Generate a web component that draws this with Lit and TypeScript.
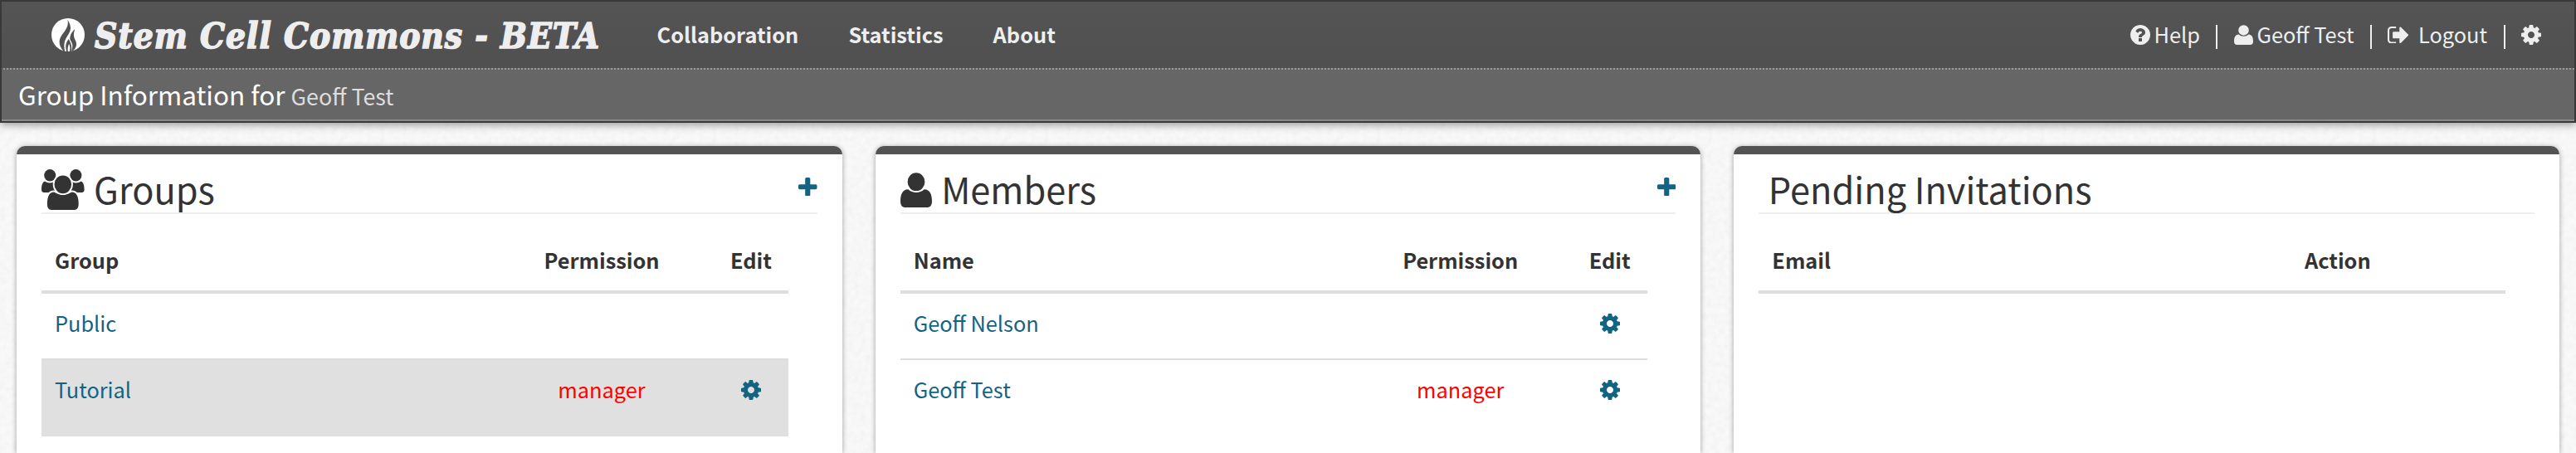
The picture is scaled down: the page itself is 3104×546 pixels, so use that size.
import { LitElement, html, css, svg, nothing } from "lit";
import { customElement, property } from "lit/decorators.js";
import { classMap } from "lit/directives/class-map.js";

const COG = svg`<path d="M1152 896q0-106-75-181t-181-75-181 75-75 181 75 181 181 75 181-75 75-181zm512-109v222q0 12-8 23t-20 13l-185 28q-19 54-39 91 35 50 107 138 10 12 10 25t-9 23q-27 37-99 108t-94 71q-12 0-26-9l-138-108q-44 23-91 38-16 136-29 186-7 28-36 28h-222q-14 0-24.500-8.500t-11.500-21.500l-28-184q-49-16-90-37l-141 107q-10 9-25 9-14 0-25-11-126-114-165-168-7-10-7-23 0-12 8-23 15-21 51-66.500t54-70.500q-27-50-41-99l-183-27q-13-2-21-12.500t-8-23.500v-222q0-12 8-23t19-13l186-28q14-46 39-92-40-57-107-138-10-12-10-24 0-10 9-23 26-36 98.500-107.500t94.500-71.500q13 0 26 10l138 107q44-23 91-38 16-136 29-186 7-28 36-28h222q14 0 24.500 8.500t11.500 21.500l28 184q49 16 90 37l142-107q9-9 24-9 13 0 25 10 129 119 165 170 7 8 7 22 0 12-8 23-15 21-51 66.500t-54 70.500q26 50 41 98l183 28q13 2 21 12.500t8 23.500z"/>`;
const PLUS = svg`<path d="M1600 736v192q0 40-28 68t-68 28h-416v416q0 40-28 68t-68 28h-192q-40 0-68-28t-28-68v-416h-416q-40 0-68-28t-28-68v-192q0-40 28-68t68-28h416v-416q0-40 28-68t68-28h192q40 0 68 28t28 68v416h416q40 0 68 28t28 68z"/>`;
const HELP = svg`<path d="M1024 1376v-192q0-14-9-23t-23-9h-192q-14 0-23 9t-9 23v192q0 14 9 23t23 9h192q14 0 23-9t9-23zm256-672q0-88-55.500-163t-138.500-116-170-41q-243 0-371 213-15 24 8 42l132 100q7 6 19 6 16 0 25-12 53-68 86-92 34-24 86-24 48 0 85.500 26t37.500 59q0 38-20 61t-68 45q-63 28-115.500 86.500t-52.500 125.500v36q0 14 9 23t23 9h192q14 0 23-9t9-23q0-19 21.500-49.500t54.500-49.500q32-18 49-28.500t46-35 44.500-48 28-60.500 12.500-81zm384 192q0 209-103 385.500t-279.500 279.500-385.500 103-385.500-103-279.500-279.500-103-385.500 103-385.500 279.500-279.500 385.500-103 385.500 103 279.500 279.500 103 385.500z"/>`;
const OUT = svg`<path d="M704 1440q0 4 1 20t.5 26.500-3 23.500-10 19.500-20.500 6.500h-320q-119 0-203.500-84.500t-84.500-203.500v-704q0-119 84.500-203.500t203.500-84.500h320q13 0 22.500 9.500t9.500 22.500q0 4 1 20t.5 26.500-3 23.500-10 19.500-20.500 6.500h-320q-66 0-113 47t-47 113v704q0 66 47 113t113 47h312l11.500 1 11.500 3 8 5.500 7 9 2 13.500zm928-544q0 26-19 45l-544 544q-19 19-45 19t-45-19-19-45v-288h-448q-26 0-45-19t-19-45v-384q0-26 19-45t45-19h448v-288q0-26 19-45t45-19 45 19l544 544q19 19 19 45z"/>`;
const USER = svg`<path d="M19 0.3a10.4 10.9 0 1 1 0 21.8a10.4 10.9 0 1 1 0-21.8z"/><path d="M9.4 20.2C12 22.800 15.400 24 19 24s7-1.200 9.600-3.800C35.500 20 38 26.500 38 34.500C38 39.500 35.800 42 32 42H6C2.200 42 0 39.500 0 34.500C0 26.500 2.500 20 9.400 20.200z"/>`;
const SIDE = svg`<ellipse cx="10.200" cy="7.300" rx="7" ry="7.200"/><path d="M4.200 14.500C7.800 17 11 17 14.600 15.200L16 28H3C1 28 0 26.800 0 24.600C0 20 .8 15.400 4.200 14.500z"/>`;
const GROUP = svg`<g>${SIDE}</g><g transform="matrix(-1 0 0 1 51.600 0)">${SIDE}</g>
<g stroke="#fff" stroke-width="1.800"><path d="M15 26.500C22 31 29.600 31 36.600 26.500C43 26.500 45.600 33 45.600 42C45.600 47.500 43.500 49.900 39.600 49.900H12C8 49.900 6 47.500 6 42C6 33 8.600 26.500 15 26.500z"/><ellipse cx="25.800" cy="18.300" rx="11.200" ry="11.800"/></g>`;
const FLAME = svg`<circle cx="60.500" cy="60.500" r="60.500" fill="#fff"/><g fill="#525252"><path d="M59 5C78 36 68 50 56 68C46 84 44 98 49 122L44 120C28 102 24 84 36 64C48 46 64 32 59 5z"/><path d="M85 40C80 56 80 66 86 78C96 96 90 108 78 119L72 121C80 102 77 92 69 80C64 68 73 50 85 40z"/><path d="M63 76C51 90 50 104 55 122H60C58 108 61 101 64 94C68 101 69 108 66 122H71C77 104 71 92 63 76z"/></g>`;

const icon = (shape: unknown, viewBox: string, cls: string) =>
  html`<svg class="icon ${cls}" viewBox=${viewBox} preserveAspectRatio="none" aria-hidden="true">${shape}</svg>`;
const SQUARE = "128 128 1536 1536";

interface Row { name: string; permission?: string; editable?: boolean; active?: boolean; }

@customElement("info-panel")
class InfoPanel extends LitElement {
  @property() heading = "";
  @property() kind = "";
  @property({ attribute: false }) columns: string[] = [];
  @property({ attribute: false }) rows: Row[] = [];

  static styles = css`
    :host { display: flex; flex-direction: column; flex: 1 1 0; min-width: 0; background: #fff; border-radius: 10px 10px 0 0; box-shadow: 0 1px 6px rgba(0,0,0,.36); }
    .bar { flex: none; height: 10px; background: #535353; border-radius: 10px 10px 0 0; }
    .body { padding: 0 30px; }
    .head { display: flex; align-items: center; height: 58px; padding-top: 12px; margin-bottom: 20px; border-bottom: 2px solid #eee; }
    h2 { margin: 0; font-size: 43.300px; line-height: 58px; font-weight: 400; color: #333; white-space: nowrap; flex: 1; }
    h2.plain { padding-left: 11.500px; }
    .icon { display: block; flex: none; fill: #333; }
    .group { width: 51.600px; height: 49.500px; margin: 3px 11.500px 0 0; }
    .user { width: 38px; height: 42px; margin: 3px 11px 0 .5px; }
    .plus { width: 22.500px; height: 22.500px; fill: #136382; margin-bottom: 4px; }
    .cog { width: 24px; height: 24px; fill: #136382; margin-top: 8px; }
    .table { width: 900px; }
    .row { display: grid; grid-template-columns: 540px 270px 90px; box-sizing: border-box; height: 80px; padding-top: 16px; line-height: 38px; }
    .two .row { grid-template-columns: 495px 405px; }
    .th { height: 76px; font-weight: 700; border-bottom: 4px solid #ddd; color: #333; }
    .row + .row:not(.first) { border-top: 2px solid #ddd; }
    .first { height: 78px; }
    .active { background: #e0e0e0; height: 94px; }
    .cell { padding: 0 16px; white-space: nowrap; }
    .mid { display: flex; justify-content: center; padding: 0; }
    .link { color: #136382; }
    .perm { color: #f00; }
  `;

  render() {
    const mark = this.kind === "group" ? icon(GROUP, "0 0 51.6 49.5", "group") : this.kind === "user" ? icon(USER, "0 0 38 42", "user") : nothing;
    return html`<div class="bar"></div>
      <div class="body">
        <div class="head">${mark}<h2 class=${this.kind ? "" : "plain"}>${this.heading}</h2>${this.kind ? icon(PLUS, "192 128 1408 1408", "plus") : nothing}</div>
        <div class="table ${this.columns.length === 2 ? "two" : ""}">
          <div class="row th">${this.columns.map((c, i) => html`<div class="cell ${i ? "mid" : ""}">${c}</div>`)}</div>
          ${this.rows.map((r, i) => html`<div class=${classMap({ row: true, first: i === 0, active: !!r.active })}>
            <div class="cell link">${r.name}</div>
            <div class="cell mid perm">${r.permission ?? ""}</div>
            <div class="cell mid">${r.editable ? icon(COG, SQUARE, "cog") : nothing}</div>
          </div>`)}
        </div>
      </div>`;
  }
}

@customElement("app-root")
class AppRoot extends LitElement {
  static styles = css`
    :host { display: flex; flex-direction: column; height: 546px; overflow: hidden; color: #333;
      font: 25.350px/38px "Noto Sans CJK SC", "Noto Sans", sans-serif;
      background: #f4f4f4 url("data:image/svg+xml,%3Csvg xmlns='http://www.w3.org/2000/svg' width='400' height='400'%3E%3Cfilter id='n' x='0' y='0' width='100%25' height='100%25'%3E%3CfeTurbulence type='fractalNoise' baseFrequency='.14' numOctaves='3' stitchTiles='stitch'/%3E%3CfeColorMatrix values='.06 0 0 0 .924 .06 0 0 0 .924 .06 0 0 0 .924 0 0 0 0 1' color-interpolation-filters='sRGB'/%3E%3C/filter%3E%3Crect width='400' height='400' filter='url(%23n)'/%3E%3C/svg%3E"); }
    header { flex: none; border: 2px solid #393939; box-shadow: 0 2px 10px rgba(0,0,0,.42); color: #eee; }
    .bar { display: flex; align-items: center; height: 80px; padding: 0 40px 0 60px; background: linear-gradient(#545454, #505050); }
    .dots { height: 2px; background: repeating-linear-gradient(90deg, #666 0 2px, #999 2px 4px); }
    .sub { height: 60px; line-height: 58px; padding-left: 20px; background: #666; border-bottom: 2px solid #8a8a8a; font-size: 31.500px; color: #fff; white-space: nowrap; }
    .who { font-size: 26.800px; color: #ddd; }
    .icon { display: block; flex: none; fill: #eee; }
    .logo { width: 40px; height: 40px; }
    .brand { width: 679px; padding: 3px 0 0 12px; box-sizing: border-box; white-space: nowrap; font: italic 700 42px/50px "DejaVu Serif Condensed", "DejaVu Serif", serif; letter-spacing: 1px; -webkit-text-stroke: 1.500px #eee; }
    nav { display: flex; gap: 60px; font-weight: 700; padding-bottom: 2px; margin-left: 10.500px; }
    .tools { display: flex; align-items: center; margin-left: auto; white-space: nowrap; }
    .tools span { padding-bottom: 2px; }
    .help { width: 24px; height: 24px; margin-right: 4.500px; }
    .user { width: 23px; height: 24px; margin-right: 4.500px; }
    .out { width: 25px; height: 20.500px; margin-right: 11.500px; }
    .cog { width: 24px; height: 24px; }
    .sep { width: 2px; height: 29px; margin: 5px 19.500px 0; background: #eee; }
    main { display: flex; flex: 1; gap: 40px; padding: 28px 20px 0; }
  `;

  render() {
    return html`
      <header>
        <div class="bar">
          ${icon(FLAME, "0 0 121 121", "logo")}
          <div class="brand">Stem Cell Commons - BETA</div>
          <nav><span>Collaboration</span><span>Statistics</span><span>About</span></nav>
          <div class="tools">
            ${icon(HELP, SQUARE, "help")}<span>Help</span><i class="sep"></i>
            ${icon(USER, "0 0 38 42", "user")}<span>Geoff Test</span><i class="sep"></i>
            ${icon(OUT, "64 256 1568 1280", "out")}<span>Logout</span><i class="sep"></i>
            ${icon(COG, SQUARE, "cog")}
          </div>
        </div>
        <div class="dots"></div>
        <div class="sub">Group Information for <span class="who">Geoff Test</span></div>
      </header>
      <main>
        <info-panel heading="Groups" kind="group" .columns=${["Group", "Permission", "Edit"]}
          .rows=${[{ name: "Public" }, { name: "Tutorial", permission: "manager", editable: true, active: true }]}></info-panel>
        <info-panel heading="Members" kind="user" .columns=${["Name", "Permission", "Edit"]}
          .rows=${[{ name: "Geoff Nelson", editable: true }, { name: "Geoff Test", permission: "manager", editable: true }]}></info-panel>
        <info-panel heading="Pending Invitations" .columns=${["Email", "Action"]}></info-panel>
      </main>`;
  }
}
